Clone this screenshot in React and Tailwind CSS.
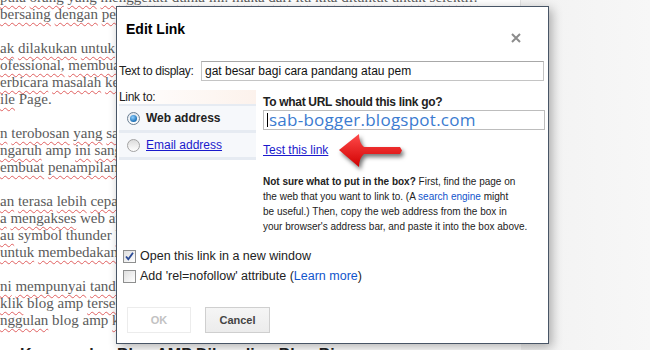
import React from "react";

const english = new Set(["Page.", "symbol", "thunder", "amp", "web", "blog", "b"]);

const Line = ({ text }) => {
  const words = text.split(" ");
  return (
    <p className="h-[17px] whitespace-nowrap">
      {words.map((w, i) => (
        <span key={i}>
          {w === "" ? "" : english.has(w) ? (
            w
          ) : (
            <span className="underline decoration-wavy decoration-[#e06060] decoration-1 underline-offset-[3px]">{w}</span>
          )}
          {i < words.length - 1 ? " " : ""}
        </span>
      ))}
    </p>
  );
};

const blog = [
  "   pula orang yang menggeluti dunia ini. maka dari itu kita dituntut untuk selektif.",
  "  bersaing dengan pengguna lain yang juga sama memiliki blog berkualitas.",
  "",
  "ak dilakukan untuk blog yang ingin terlihat lebih rapi dan bagus.",
  "ofessional, membuat tampilan blog menjadi lebih ringan dan cepat.",
  "erbicara masalah kecepatan tentu saja tidak lepas dari tampilan.",
  "ile Page.",
  "",
  "n terobosan yang sangat berguna bagi para blogger dan pemilik web.",
  "ngaruh amp ini sangat besar bagi cara pandang atau pembaca blog.",
  "embuat penampilan blog menjadi lebih ringan saat dibuka.",
  "",
  "an terasa lebih cepat ketika dibuka melalui perangkat mobile.",
  "a mengakses web amp akan terlihat tanda khusus pada hasil pencarian.",
  "au symbol thunder berwarna abu pada bagian kiri judul artikel.",
  "  untuk membedakan blog biasa dengan blog yang sudah amp.",
  "",
  "ni mempunyai tanda khusus di halaman pencarian google.",
  "klik blog amp tersebut maka akan terbuka dengan sangat cepat.",
  "nggulan blog amp kepada pembaca yang menggunakan ponsel.",
  "",
];

const Radio = ({ on }) =>
  on ? (
    <span className="w-[13px] h-[13px] rounded-full border border-[#6b7f92] bg-gradient-to-b from-[#dfe6ee] to-[#ffffff] flex items-center justify-center shrink-0">
      <span className="w-[7px] h-[7px] rounded-full bg-[radial-gradient(circle_at_40%_35%,#8fd0ff,#1b6fb5_70%)]" />
    </span>
  ) : (
    <span className="w-[13px] h-[13px] rounded-full border border-[#a3a3a3] bg-gradient-to-b from-[#dcdcdc] to-[#ffffff] shrink-0" />
  );

const Check = ({ on }) => (
  <span className="w-[13px] h-[13px] border border-[#8e8f8f] bg-gradient-to-br from-[#dedede] to-[#ffffff] flex items-center justify-center shrink-0">
    {on && (
      <svg width="11" height="11" viewBox="0 0 11 11">
        <path d="M2 5.5 L4.3 8.2 L9 1.8" fill="none" stroke="#2b4b96" strokeWidth="1.8" />
      </svg>
    )}
  </span>
);

export default function App() {
  return (
    <div className="relative w-[650px] h-[350px] overflow-hidden bg-white flex font-['Liberation_Sans',Arial,sans-serif]">
      <div className="w-[521px] h-full border-r border-[#e2e2e2] bg-white text-[#5b5b5b] text-[15px] leading-[17px] font-['Liberation_Serif',serif] -mt-[11px]">
        {blog.map((t, i) => (
          <Line key={i} text={t} />
        ))}
        <p className="h-[17px] whitespace-nowrap pl-[20px] text-[#222] font-['Liberation_Sans',sans-serif] font-bold text-[16px]">
          Keunggulan Blog AMP Dibanding Blog Biasa
        </p>
      </div>
      <div className="flex-1 h-full bg-gradient-to-r from-[#f2f2f2] to-[#f7f7f7]" />

      {/* dialog */}
      <div className="absolute left-[116px] top-[6px] w-[433px] h-[338px] bg-white border border-[#485566] shadow-[3px_3px_10px_rgba(0,0,0,0.3)] text-[#222] text-[12px]">
        <div className="pl-[9px] mt-[14px] h-[16px] leading-[16px] text-[14px] font-bold text-black">Edit Link</div>
        <svg className="absolute left-[394px] top-[26px]" width="10" height="10" viewBox="0 0 10 10">
          <path d="M1 1 L9 9 M9 1 L1 9" stroke="#8c8c8c" strokeWidth="2" />
        </svg>

        <div className="mt-[24px] pl-[2px] flex items-center h-[20px]">
          <span className="w-[82px] text-[12px] tracking-[-0.3px]">Text to display:</span>
          <div className="w-[343px] h-[20px] border border-[#c4c4c4] border-t-[#a8a8a8] flex items-center px-[3px] text-[12px] text-[#111]">
            gat besar bagi cara pandang atau pem
          </div>
        </div>

        <div className="mt-[9px] pl-[2px] flex">
          <div className="w-[137px]">
            <div className="h-[14px] leading-[14px] tracking-[-0.3px] bg-gradient-to-r from-white to-[#fcf2ec]">Link to:</div>
            <div className="bg-[#e6ebf2] pt-[2px] pb-[3px] flex flex-col gap-[3px]">
              <div className="h-[24px] bg-[#f6f8fb] flex items-center pl-[8px] gap-[6px]">
                <Radio on />
                <span className="font-bold">Web address</span>
              </div>
              <div className="h-[24px] bg-[#f6f8fb] flex items-center pl-[8px] gap-[6px]">
                <Radio />
                <span className="underline text-[#1a1acc]">Email address</span>
              </div>
            </div>
          </div>
          <div className="ml-[7px] w-[282px] pt-[5px]">
            <div className="h-[14px] leading-[14px] font-bold tracking-[-0.3px]">To what URL should this link go?</div>
            <div className="mt-[1px] h-[20px] border border-[#bdbdbd] flex items-center pl-[3px] gap-[1px]">
              <span className="w-px h-[14px] bg-black" />
              <span className="font-['Open_Sans',sans-serif] text-[17px] leading-[20px] tracking-[0.25px] text-[#3b7bd0]">sab-bogger.blogspot.com</span>
            </div>
            <div className="mt-[13px] h-[14px] leading-[14px] underline text-[#1a1acc]">Test this link</div>
            <p className="mt-[17px] text-[10px] leading-[15px] text-[#222]">
              <b>Not sure what to put in the box?</b> First, find the page on
              <br />
              the web that you want to link to. (A <span className="text-[#1155cc]">search engine</span> might
              <br />
              be useful.) Then, copy the web address from the box in
              <br />
              your browser's address bar, and paste it into the box above.
            </p>
          </div>
        </div>

        <div className="mt-[12px] pl-[6px] flex flex-col text-[12.5px]">
          <div className="h-[20px] flex items-center gap-[4px]">
            <Check on />
            <span>Open this link in a new window</span>
          </div>
          <div className="h-[20px] flex items-center gap-[4px]">
            <Check />
            <span>
              Add 'rel=nofollow' attribute (<span className="text-[#1155cc]">Learn more</span>)
            </span>
          </div>
        </div>

        <div className="mt-[21px] pl-[10px] flex gap-[14px] text-[11px] font-bold">
          <div className="w-[64px] h-[26px] border border-[#ececec] bg-white text-[#c2c2c2] flex items-center justify-center">OK</div>
          <div className="w-[65px] h-[26px] border border-[#cfcfcf] bg-gradient-to-b from-[#f5f5f5] to-[#ececec] text-[#444] flex items-center justify-center">
            Cancel
          </div>
        </div>
      </div>

      {/* red arrow */}
      <svg className="absolute left-[337px] top-[131px] drop-shadow-[2px_3px_2px_rgba(0,0,0,0.55)]" width="68" height="40" viewBox="0 0 68 40">
        <defs>
          <linearGradient id="ar" x1="0" y1="0" x2="0" y2="1">
            <stop offset="0" stopColor="#ff4a4a" />
            <stop offset="1" stopColor="#d00000" />
          </linearGradient>
        </defs>
        <path d="M2 19 L22 3 Q22 12 27 16 L63 16 L65 19.5 L63 23 L27 23 Q22 27 22 36 Z" fill="url(#ar)" />
      </svg>
    </div>
  );
}
